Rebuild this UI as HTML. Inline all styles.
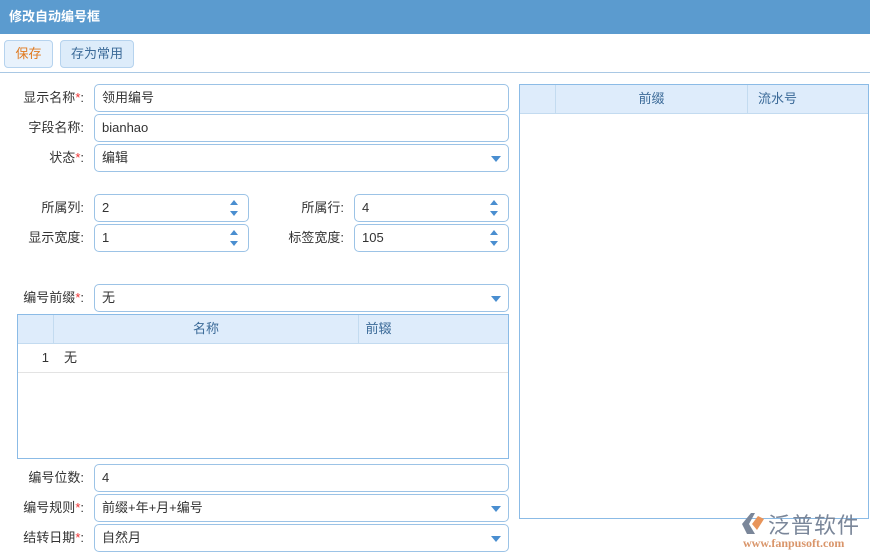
<!DOCTYPE html><html><head><meta charset="utf-8"><style>
*{box-sizing:border-box;margin:0;padding:0}
body{width:870px;height:556px;background:#fff;font-family:"Liberation Sans","Noto Sans CJK SC",sans-serif;font-size:13px;color:#333;position:relative;overflow:hidden}
.a{position:absolute}
.title{left:0;top:0;width:870px;height:34px;background:#5b9bcf;color:#fff;font-weight:bold;font-size:13px;line-height:34px;padding-left:9px}
.tb{left:0;top:34px;width:870px;height:39px;border-bottom:1px solid #a9c8e4}
.btn{top:6px;height:28px;border:1px solid #b6d3ee;border-radius:4px;background:#ddecfa;line-height:26px;text-align:center;color:#3b6a98}
.lbl{text-align:right;line-height:28px;height:28px}
.lbl i{color:#e33;font-style:normal}
.in{height:28px;border:1px solid #9cc3e6;border-radius:5px;line-height:26px;padding-left:7px;background:#fff}
.dd:after{content:"";position:absolute;right:7px;top:11px;border-left:5px solid transparent;border-right:5px solid transparent;border-top:6px solid #4a8ed0}
.sp:before{content:"";position:absolute;right:10px;top:5px;border-left:4px solid transparent;border-right:4px solid transparent;border-bottom:5px solid #4a8ed0}
.sp:after{content:"";position:absolute;right:10px;top:16px;border-left:4px solid transparent;border-right:4px solid transparent;border-top:5px solid #4a8ed0}
.grid{border:1px solid #8bbbe6;background:#fff}
.gh{position:absolute;left:0;top:0;right:0;height:29px;background:#deecfb;border-bottom:1px solid #c3dbf0;color:#3b6a98;line-height:28px}
.gh span{position:absolute;top:0;height:28px;text-align:center;border-left:1px solid #c3dbf0}
</style></head><body>
<div class="a title">修改自动编号框</div>
<div class="a tb">
<div class="a btn" style="left:4px;width:49px;color:#e07a20;background:#e8f2fc">保存</div>
<div class="a btn" style="left:60px;width:74px">存为常用</div>
</div>

<div class="a lbl" style="left:0;top:84px;width:84px">显示名称<i>*</i>:</div>
<div class="a in" style="left:94px;top:84px;width:415px">领用编号</div>
<div class="a lbl" style="left:0;top:114px;width:84px">字段名称:</div>
<div class="a in" style="left:94px;top:114px;width:415px">bianhao</div>
<div class="a lbl" style="left:0;top:144px;width:84px">状态<i>*</i>:</div>
<div class="a in dd" style="left:94px;top:144px;width:415px">编辑</div>

<div class="a lbl" style="left:0;top:194px;width:84px">所属列:</div>
<div class="a in sp" style="left:94px;top:194px;width:155px">2</div>
<div class="a lbl" style="left:260px;top:194px;width:84px">所属行:</div>
<div class="a in sp" style="left:354px;top:194px;width:155px">4</div>
<div class="a lbl" style="left:0;top:224px;width:84px">显示宽度:</div>
<div class="a in sp" style="left:94px;top:224px;width:155px">1</div>
<div class="a lbl" style="left:260px;top:224px;width:84px">标签宽度:</div>
<div class="a in sp" style="left:354px;top:224px;width:155px">105</div>

<div class="a lbl" style="left:0;top:284px;width:84px">编号前缀<i>*</i>:</div>
<div class="a in dd" style="left:94px;top:284px;width:415px">无</div>

<div class="a grid" style="left:17px;top:314px;width:492px;height:145px">
<div class="gh"><span style="left:35px;width:305px">名称</span><span style="left:340px;width:40px">前辍</span></div>
<div class="a" style="left:0;top:29px;width:490px;height:29px;border-bottom:1px solid #e3e3e3;line-height:28px"><span class="a" style="left:0;width:31px;text-align:right">1</span><span class="a" style="left:46px">无</span></div>
</div>

<div class="a lbl" style="left:0;top:464px;width:84px">编号位数:</div>
<div class="a in" style="left:94px;top:464px;width:415px">4</div>
<div class="a lbl" style="left:0;top:494px;width:84px">编号规则<i>*</i>:</div>
<div class="a in dd" style="left:94px;top:494px;width:415px">前缀+年+月+编号</div>
<div class="a lbl" style="left:0;top:524px;width:84px">结转日期<i>*</i>:</div>
<div class="a in dd" style="left:94px;top:524px;width:415px">自然月</div>

<div class="a grid" style="left:519px;top:84px;width:350px;height:435px">
<div class="gh"><span style="left:35px;width:192px">前缀</span><span style="left:227px;width:60px">流水号</span></div>
</div>

<div class="a" style="left:740px;top:511px;width:26px;height:24px">
<svg width="26" height="24"><path d="M2 13 L11 2 L15 2 L9 13 L15 23 L7 23Z" fill="#7a8699"/><path d="M12 13 L18 5 L24 8 L17 19Z" fill="#e8945a"/></svg></div>
<div class="a" style="left:768px;top:508px;font-size:22px;color:#7a8699;letter-spacing:1px">泛普软件</div>
<div class="a" style="left:743px;top:536px;font-size:12px;color:#d9956a;font-family:'Liberation Serif',serif;font-weight:bold">www.fanpusoft.com</div>
</body></html>
